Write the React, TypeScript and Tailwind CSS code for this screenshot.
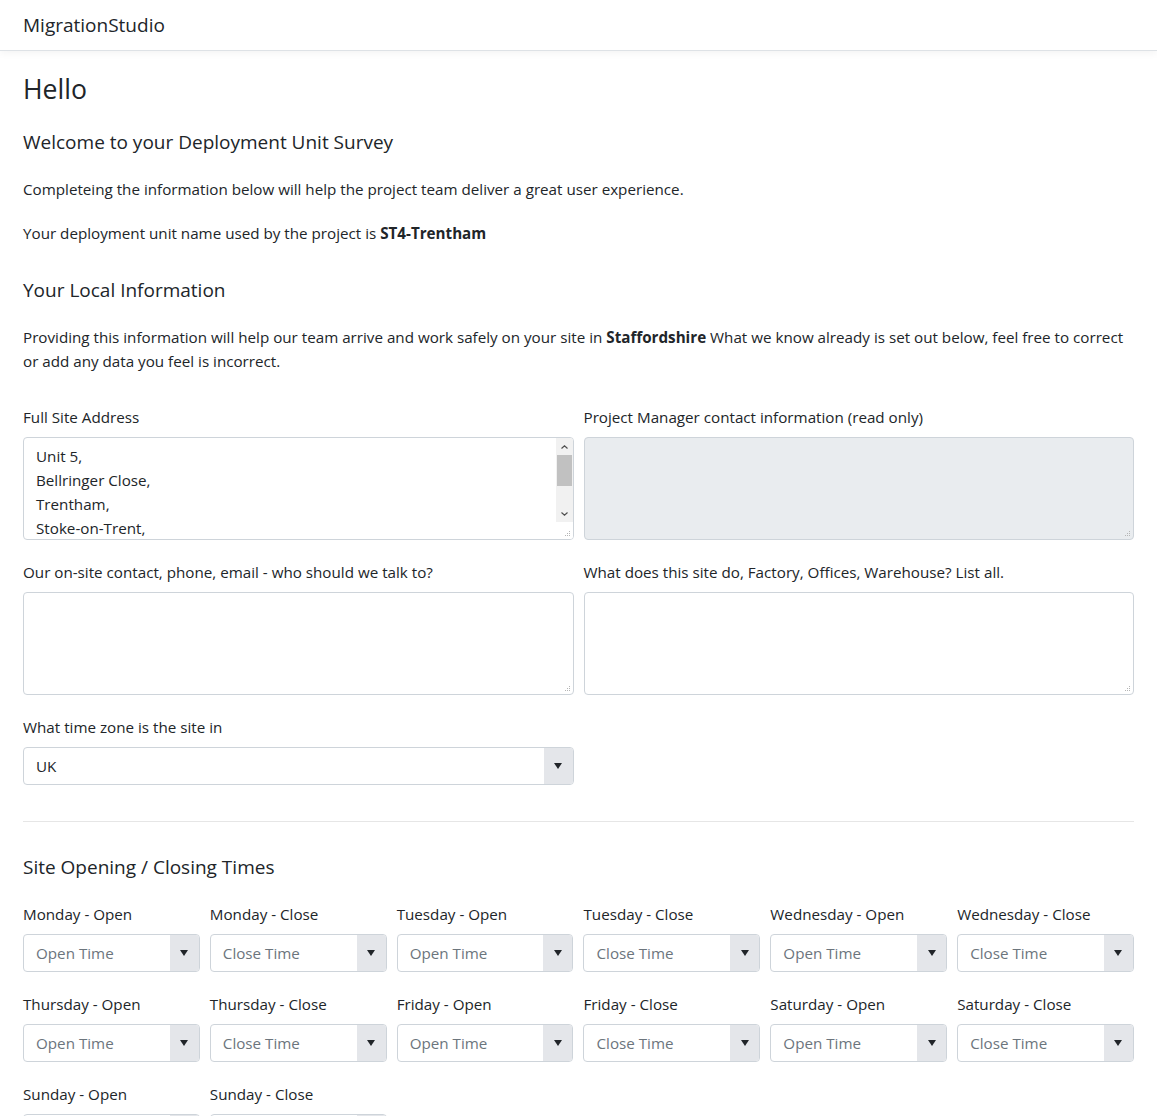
import React from 'react';

const days = ['Monday', 'Tuesday', 'Wednesday', 'Thursday', 'Friday', 'Saturday', 'Sunday'];

const Caret: React.FC = () => (
  <div className="w-[29px] flex items-center justify-center bg-[#e4e6ea]">
    <span className="block w-0 h-0 border-l-[4px] border-r-[4px] border-t-[6px] border-l-transparent border-r-transparent border-t-[#212529]" />
  </div>
);

const Grip: React.FC = () => (
  <svg className="absolute right-[2px] bottom-[2px]" width="7" height="7" viewBox="0 0 7 7" fill="#b5b5b5">
    <rect x="5" y="1" width="1" height="1" />
    <rect x="3" y="3" width="1" height="1" />
    <rect x="5" y="3" width="1" height="1" />
    <rect x="1" y="5" width="1" height="1" />
    <rect x="3" y="5" width="1" height="1" />
    <rect x="5" y="5" width="1" height="1" />
  </svg>
);

const TimeSelect: React.FC<{ label: string; placeholder: string }> = ({ label, placeholder }) => (
  <div className="mb-5">
    <label className="block mb-2">{label}</label>
    <div className="flex h-[38px] border border-[#ced4da] rounded overflow-hidden bg-white">
      <div className="flex-1 flex items-center px-3 text-[#6c757d]">{placeholder}</div>
      <Caret />
    </div>
  </div>
);

const TextBox: React.FC<{ readOnly?: boolean }> = ({ readOnly }) => (
  <div className={`relative h-[103px] border border-[#ced4da] rounded ${readOnly ? 'bg-[#e9ecef]' : 'bg-white'}`}>
    <Grip />
  </div>
);

const App: React.FC = () => {
  const fields = days.flatMap(d => [
    { label: `${d} - Open`, placeholder: 'Open Time' },
    { label: `${d} - Close`, placeholder: 'Close Time' },
  ]);

  return (
    <div className="min-h-screen bg-white text-[#212529] text-[15.2px] leading-6" style={{ fontFamily: '"Open Sans", "Noto Sans", sans-serif' }}>
      <nav className="h-[51px] border-b border-[#dee2e6] shadow-[0_2px_8px_rgba(0,0,0,0.05)] flex items-center px-[23px]">
        <div className="text-[19px]">MigrationStudio</div>
      </nav>

      <main className="px-[23px] pt-[21px]">
        <h1 className="text-[26.6px] leading-[34px] mb-6">Hello</h1>
        <h5 className="text-[19px] leading-6 mb-[23px]">Welcome to your Deployment Unit Survey</h5>
        <p className="mb-5">Completeing the information below will help the project team deliver a great user experience.</p>
        <p className="mb-[33px]">
          Your deployment unit name used by the project is <b>ST4-Trentham</b>
        </p>

        <h5 className="text-[19px] leading-6 mb-[23px]">Your Local Information</h5>
        <p className="mb-8">
          Providing this information will help our team arrive and work safely on your site in <b>Staffordshire</b> What we
          know already is set out below, feel free to correct or add any data you feel is incorrect.
        </p>

        <div className="grid grid-cols-2 gap-x-[10px]">
          <div className="mb-5">
            <label className="block mb-2">Full Site Address</label>
            <div className="relative h-[103px] border border-[#ced4da] rounded bg-white overflow-hidden flex">
              <div className="flex-1 px-3 py-[6px]">
                Unit 5,
                <br />
                Bellringer Close,
                <br />
                Trentham,
                <br />
                Stoke-on-Trent,
              </div>
              <div className="w-[17px] flex flex-col">
                <div className="flex-1 flex flex-col bg-[#f1f1f1]">
                  <div className="h-[17px] flex items-center justify-center text-[#505050]">
                    <svg width="7" height="4" viewBox="0 0 7 4" fill="none" stroke="currentColor" strokeWidth="1.2">
                      <path d="M0.5 3.5 3.5 0.8 6.5 3.5" />
                    </svg>
                  </div>
                  <div className="mx-[1px] h-[31px] bg-[#c1c1c1]" />
                  <div className="flex-1" />
                  <div className="h-[17px] flex items-center justify-center text-[#505050]">
                    <svg width="7" height="4" viewBox="0 0 7 4" fill="none" stroke="currentColor" strokeWidth="1.2">
                      <path d="M0.5 0.5 3.5 3.2 6.5 0.5" />
                    </svg>
                  </div>
                </div>
                <div className="h-[17px] bg-white" />
              </div>
              <Grip />
            </div>
          </div>
          <div className="mb-5">
            <label className="block mb-2">Project Manager contact information (read only)</label>
            <TextBox readOnly />
          </div>
          <div className="mb-5">
            <label className="block mb-2">Our on-site contact, phone, email - who should we talk to?</label>
            <TextBox />
          </div>
          <div className="mb-5">
            <label className="block mb-2">What does this site do, Factory, Offices, Warehouse? List all.</label>
            <TextBox />
          </div>
          <div>
            <label className="block mb-2">What time zone is the site in</label>
            <div className="flex h-[38px] border border-[#ced4da] rounded overflow-hidden">
              <div className="flex-1 flex items-center px-3">UK</div>
              <Caret />
            </div>
          </div>
        </div>

        <hr className="mt-9 mb-[33px] border-t border-[#e6e6e6]" />

        <h5 className="text-[19px] leading-6 mb-[23px]">Site Opening / Closing Times</h5>
        <div className="grid grid-cols-6 gap-x-[10px]">
          {fields.map(f => (
            <TimeSelect key={f.label} label={f.label} placeholder={f.placeholder} />
          ))}
        </div>
      </main>
    </div>
  );
};

export default App;
